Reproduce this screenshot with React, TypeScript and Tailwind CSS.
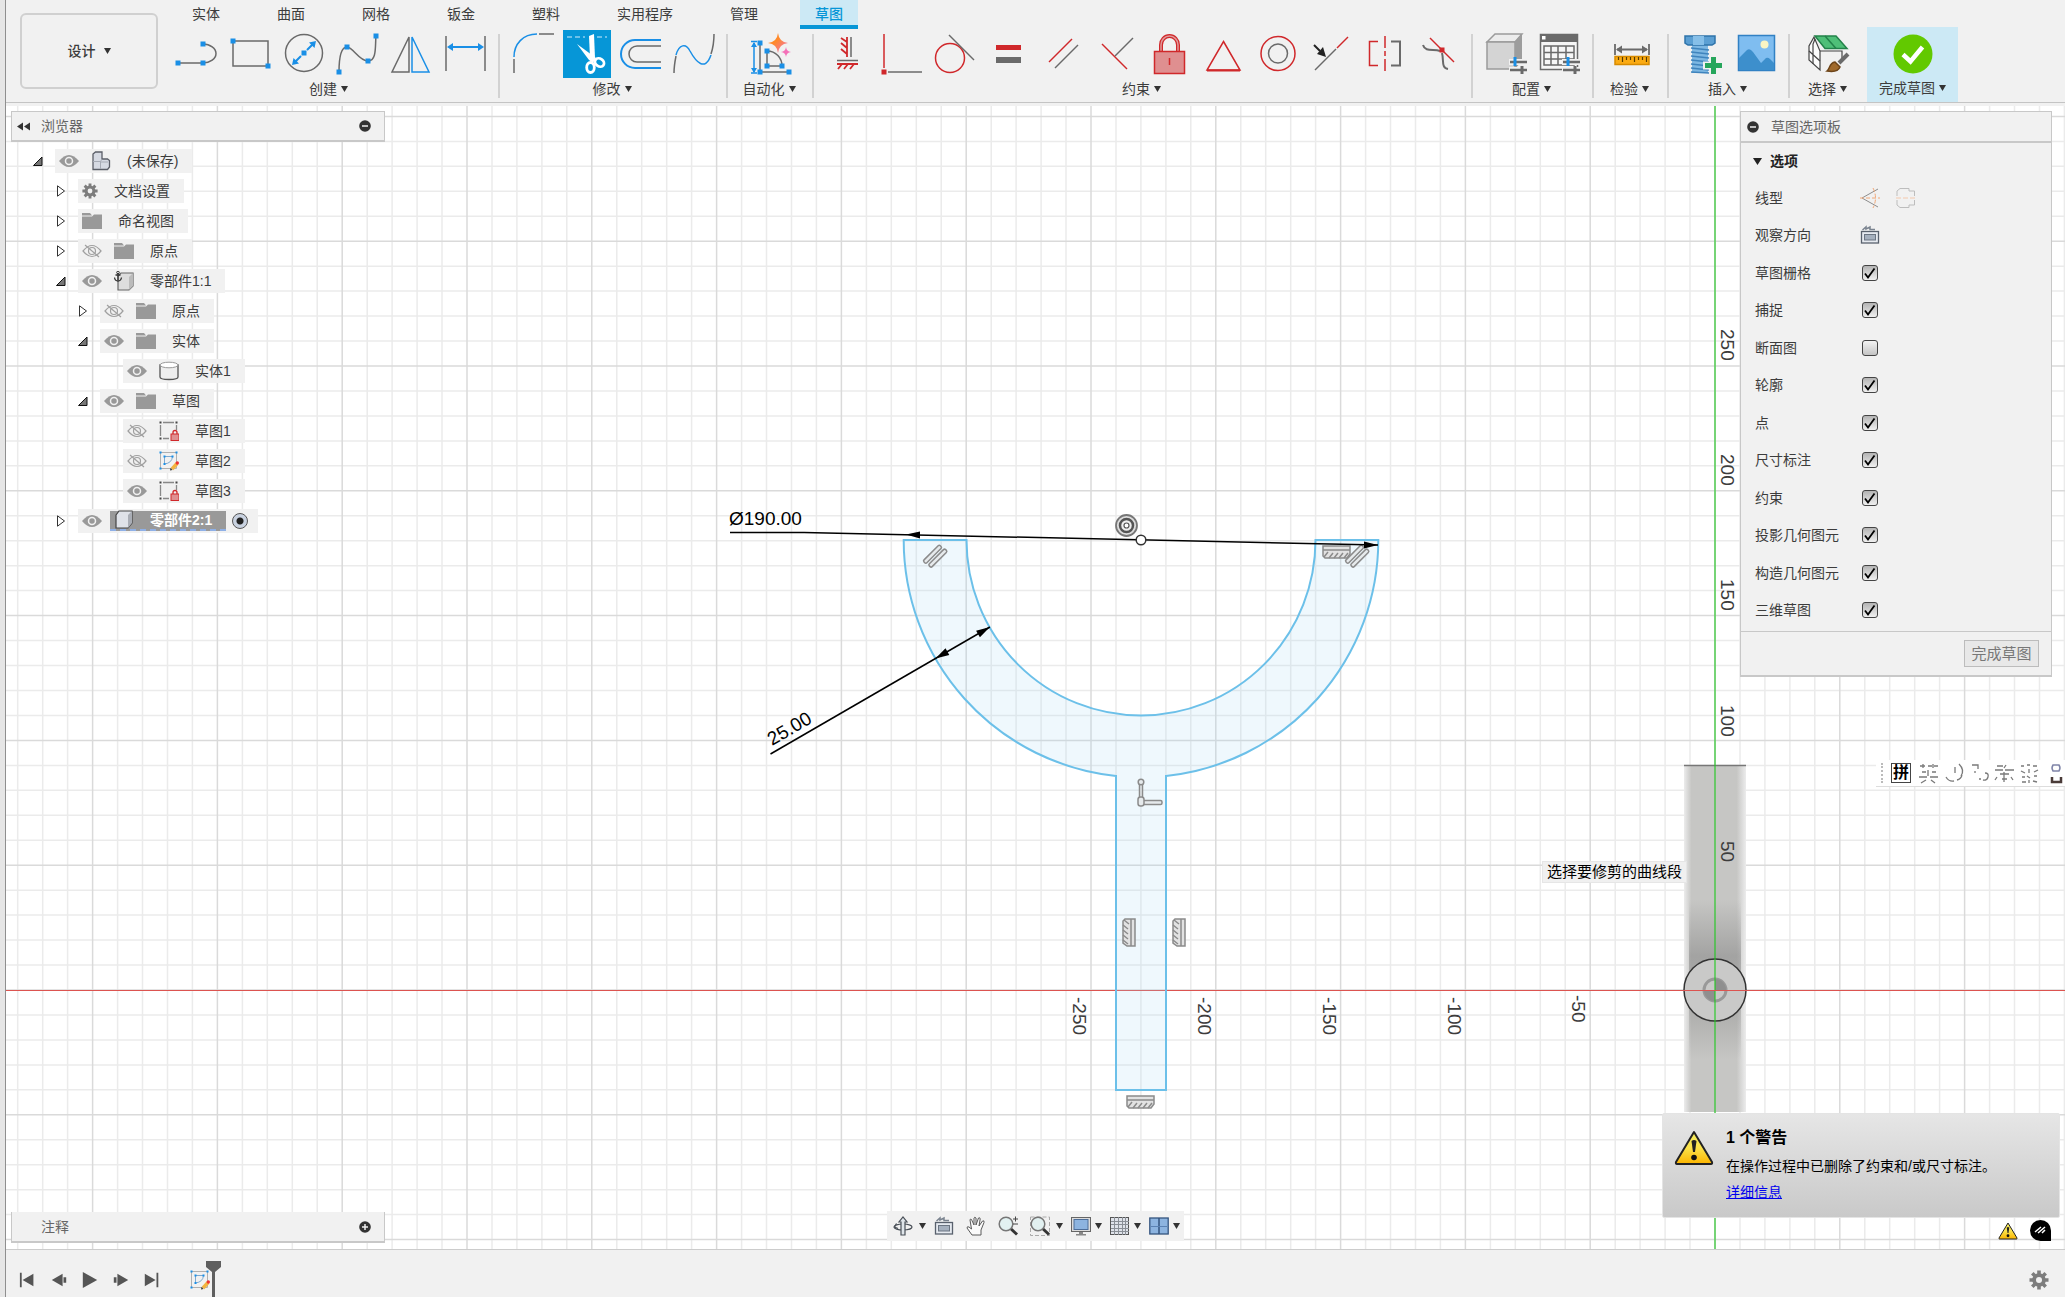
import { useState } from "react";
import type { ReactNode } from "react";

const RED = "#d0282b";
const GRAY = "#6a6a6a";
const BLUE = "#1a8fe6";

type ToolDef = { name: string; active?: boolean; icon: ReactNode };

function Dot({ x, y, c = BLUE }: { x: number; y: number; c?: string }) {
  return <rect x={x - 2.5} y={y - 2.5} width="5" height="5" fill={c} />;
}

function Caret({ className = "" }: { className?: string }) {
  return (
    <svg width="7" height="6" viewBox="0 0 7 6" className={className} aria-hidden="true">
      <path d="M0 0h7L3.5 6z" fill="#333" />
    </svg>
  );
}

const createTools: ToolDef[] = [
  {
    name: "直线",
    icon: (
      <>
        <path d="M6 33H31M31 14a13 9.5 0 0 1 0 19" stroke={GRAY} />
        <Dot x={6} y={33} /><Dot x={31} y={33} /><Dot x={31} y={14} />
      </>
    ),
  },
  {
    name: "矩形",
    icon: (
      <>
        <rect x="7" y="11" width="35" height="25" stroke={GRAY} />
        <Dot x={7} y={11} /><Dot x={42} y={36} />
      </>
    ),
  },
  {
    name: "圆",
    icon: (
      <>
        <circle cx="24" cy="23" r="18.5" stroke={GRAY} />
        <path d="M15 32L21 26M27 20L33 14" stroke={BLUE} strokeWidth="2" />
        <path d="M36 11l-7 1.500 5.500 5.500zM12 35l7-1.500-5.500-5.500z" fill={BLUE} />
        <Dot x={24} y={23} />
      </>
    ),
  },
  {
    name: "样条曲线",
    icon: (
      <>
        <path d="M6 42C6 28 8 17 14 17S26 31 35 31S42 16 43 6" stroke={GRAY} />
        <Dot x={6} y={42} /><Dot x={14} y={17} /><Dot x={35} y={31} /><Dot x={43} y={6} />
      </>
    ),
  },
  {
    name: "镜像",
    icon: (
      <>
        <path d="M22 7V42H5z" stroke={GRAY} />
        <path d="M25 7V42H42z" stroke={BLUE} />
      </>
    ),
  },
  {
    name: "草图尺寸",
    icon: (
      <>
        <path d="M5 6V41M44 6V41" stroke={GRAY} />
        <path d="M8 17H41" stroke={BLUE} strokeWidth="2" />
        <path d="M6 17l6-4v8zM43 17l-6-4v8z" fill={BLUE} />
      </>
    ),
  },
];

const modifyTools: ToolDef[] = [
  {
    name: "圆角",
    icon: (
      <>
        <path d="M4 29V43M29 4H44" stroke={GRAY} />
        <path d="M4 27C4 14 13 4 27 4" stroke={BLUE} />
      </>
    ),
  },
  {
    name: "修剪",
    active: true,
    icon: (
      <>
        <path d="M4 7H22M34 7H44" stroke="#8fd0ef" strokeWidth="1.500" strokeDasharray="5 3" />
        <path d="M26 6L31 4L32 28L27 28z" fill="#fff" />
        <path d="M14 14L33 28L30 33L26 30z" fill="#fff" />
        <ellipse cx="27.500" cy="37.500" rx="3.800" ry="5" stroke="#fff" strokeWidth="2.800" />
        <ellipse cx="36.500" cy="32.500" rx="4.800" ry="3.800" stroke="#fff" strokeWidth="2.800" transform="rotate(35 36.500 32.500)" />
      </>
    ),
  },
  {
    name: "偏移",
    icon: (
      <>
        <path d="M44 10H18a14 14 0 0 0 0 28H44" stroke={BLUE} strokeWidth="2" />
        <path d="M44 16H20a8 8 0 0 0 0 16H44" stroke={GRAY} />
      </>
    ),
  },
  {
    name: "延伸曲线",
    icon: (
      <>
        <path d="M4 43C4 36 5 31 6 26M41 24C43 18 44 12 44 4" stroke={GRAY} />
        <path d="M6 25C9 14 16 13 20 21C26 32 35 42 41 25" stroke={BLUE} />
      </>
    ),
  },
];

const autoTools: ToolDef[] = [
  {
    name: "自动约束",
    icon: (
      <>
        <defs>
          <linearGradient id="spark" x1="0" y1="0" x2="1" y2="1">
            <stop offset="0.400" stopColor="#ff8a2a" />
            <stop offset="1" stopColor="#f06fd0" />
          </linearGradient>
        </defs>
        <path d="M13 13V42H42M20 21V36H35C35 28 29 21 20 21" stroke={GRAY} />
        <path d="M4 11.500H10M4 43H10M7 13V42" stroke={BLUE} strokeWidth="1.500" />
        <path d="M7 12l-3 5h6zM7 43l-3-5h6z" fill={BLUE} />
        <Dot x={13} y={13} /><Dot x={13} y={42} /><Dot x={42} y={42} />
        <Dot x={20} y={21} /><Dot x={20} y={36} /><Dot x={35} y={36} />
        <path d="M31 3Q32 12 41 13Q32 14 31 23Q30 14 21 13Q30 12 31 3z" fill="url(#spark)" />
        <path d="M39 17Q39.500 21.500 44 22Q39.500 22.500 39 27Q38.500 22.500 34 22Q38.500 21.500 39 17z" fill="#f470b8" />
      </>
    ),
  },
];

const constraintTools: ToolDef[] = [
  {
    name: "水平/垂直",
    icon: (
      <>
        <path d="M23 7V27M17 8l6 4M17 13l6 5M17 19l6 5" stroke={RED} strokeWidth="1.800" />
        <path d="M27 7V27M13 30.500H34" stroke={GRAY} />
        <path d="M13 34H34M18 34l-4 5M24 34l-4 5M30 34l-4 5" stroke={RED} strokeWidth="1.800" />
      </>
    ),
  },
  {
    name: "重合",
    icon: (
      <>
        <path d="M6 4V38" stroke={RED} />
        <path d="M10 42H44" stroke={GRAY} />
        <Dot x={6} y={42} c={RED} />
      </>
    ),
  },
  {
    name: "相切",
    icon: (
      <>
        <circle cx="19" cy="28" r="14.500" stroke={RED} />
        <path d="M18 5L43 30" stroke={GRAY} />
      </>
    ),
  },
  {
    name: "相等",
    icon: (
      <>
        <rect x="11" y="15" width="25" height="5" fill={RED} />
        <rect x="11" y="27" width="25" height="6" fill={GRAY} />
      </>
    ),
  },
  {
    name: "平行",
    icon: (
      <>
        <path d="M10 32L33 9" stroke={RED} />
        <path d="M16 38L39 15" stroke={GRAY} />
      </>
    ),
  },
  {
    name: "垂直",
    icon: (
      <>
        <path d="M9 14L34 39" stroke={RED} />
        <path d="M22 26L40 8" stroke={GRAY} />
      </>
    ),
  },
  {
    name: "固定",
    icon: (
      <>
        <path d="M15 21V15a8.500 9 0 0 1 17 0V21" stroke={RED} strokeWidth="4" />
        <path d="M15 21V15a8.500 9 0 0 1 17 0V21" stroke="#e09a9a" strokeWidth="1.500" />
        <rect x="8.500" y="21.500" width="30" height="22" fill="#df8f90" stroke={RED} strokeWidth="1.500" />
        <path d="M23.500 28V35" stroke={RED} />
      </>
    ),
  },
  {
    name: "中点",
    icon: (
      <>
        <path d="M23.500 11.500L40 40H7z" stroke={RED} />
        <path d="M7 40.500H40" stroke={RED} strokeWidth="2" />
      </>
    ),
  },
  {
    name: "同心",
    icon: (
      <>
        <circle cx="24" cy="23.500" r="17" stroke={RED} />
        <circle cx="24" cy="23.500" r="9.500" stroke={GRAY} />
      </>
    ),
  },
  {
    name: "共线",
    icon: (
      <>
        <path d="M8 40L29 19" stroke={GRAY} />
        <path d="M30 18L41 7" stroke={RED} />
        <path d="M7 15L13 21" stroke="#222" strokeWidth="2" />
        <path d="M19 27l-9-3 6-7z" fill="#222" />
      </>
    ),
  },
  {
    name: "对称",
    icon: (
      <>
        <path d="M17 11.500H8.500V35.500H17" stroke={RED} />
        <path d="M24 6V18M24 21V26M24 29V41" stroke={RED} />
        <path d="M30 11.500H39V35.500H30" stroke={GRAY} strokeWidth="2" />
      </>
    ),
  },
  {
    name: "曲率",
    icon: (
      <>
        <path d="M8 15C10 22 18 19 25 21M27 23C29 30 26 38 33 39" stroke={GRAY} strokeWidth="2" />
        <path d="M15 8L39 32" stroke={RED} />
        <Dot x={27} y={20} c={RED} />
      </>
    ),
  },
];

// small parameter sliders shown on both configuration icons
const sliders = (
  <>
    <path d="M26 32H45M26 40H45" stroke="#f1f1f1" strokeWidth="6" />
    <path d="M27 32H44M27 40H44" stroke={GRAY} strokeWidth="2.500" />
    <path d="M32 27V36" stroke={BLUE} strokeWidth="3" />
    <path d="M39 36V44" stroke={GRAY} strokeWidth="3" />
  </>
);

const configTools: ToolDef[] = [
  {
    name: "配置模型",
    icon: (
      <>
        <path d="M4 12L12 4H39L32 12z" fill="#ececec" stroke="#9a9a9a" />
        <path d="M4 12H32V39H4z" fill="#d4d4d4" stroke="#9a9a9a" />
        <path d="M32 12L39 4V31L32 39z" fill="#9d9d9d" />
        {sliders}
      </>
    ),
  },
  {
    name: "配置表",
    icon: (
      <>
        <rect x="4.500" y="4.500" width="37" height="35" fill="#f6f6f6" stroke={GRAY} />
        <rect x="4" y="4" width="38" height="8" fill={GRAY} />
        <rect x="6" y="6" width="3.500" height="3.500" fill="#fff" />
        <path d="M8 16H38V35H8zM8 22.500H38M8 29H38M15 16V35M22 16V35M30 16V35" stroke={GRAY} />
        {sliders}
      </>
    ),
  },
];

const inspectTools: ToolDef[] = [
  {
    name: "测量",
    icon: (
      <>
        <path d="M7 14V25M41 14V25M9 19.500H39" stroke={GRAY} strokeWidth="1.800" />
        <path d="M8 19.500l6-4v8zM40 19.500l-6-4v8z" fill={GRAY} />
        <rect x="7" y="26.500" width="34" height="8" fill="#fbab13" stroke="#d78b00" />
        <path d="M10.500 27v3M14.500 27v5M18.500 27v3M22.500 27v3M26.500 27v5M30.500 27v3M34.500 27v3M38.500 27v5" stroke="#5a3c00" strokeWidth="1.200" />
      </>
    ),
  },
];

const insertTools: ToolDef[] = [
  {
    name: "插入紧固件",
    icon: (
      <>
        <rect x="13" y="15" width="16" height="28" fill="#7db7e2" />
        <path d="M12 18l18 2M12 22l18 2M12 26l18 2M12 30l18 2M12 34l18 2M12 38l18 2M12 42l18 1" stroke="#3f84bd" strokeWidth="1.300" />
        <path d="M6 6H36V13L33 15H9L6 13z" fill="#5b9fd3" stroke="#2f74aa" />
        <path d="M14 6H25V15H14z" fill="#86bfe8" />
        <path d="M34.500 25V46M24 35.500H45" stroke="#f1f1f1" strokeWidth="8" />
        <path d="M34.500 27V44M26 35.500H43" stroke="#26a65b" strokeWidth="5" />
      </>
    ),
  },
  {
    name: "插入图像",
    icon: (
      <>
        <rect x="6.500" y="5.500" width="36" height="35" fill="#7fbdf0" stroke="#3181c4" />
        <circle cx="32.500" cy="14.500" r="4" fill="#fbf6c4" />
        <path d="M7 28L15 20Q18 18 21 22L29 33L34 28Q36 27 38 29L42 33V40H7z" fill="#3d8fcc" />
      </>
    ),
  },
];

const selectTools: ToolDef[] = [
  {
    name: "选择工具",
    icon: (
      <>
        <path d="M8 7L3 16V30L14 40V21z" fill="#fbfbfb" stroke="#444" strokeWidth="1.200" />
        <path d="M14 21H36V30M3 21L14 31M9 9L7 14V34" stroke="#444" strokeWidth="1.200" />
        <path d="M9 6H30L41 18.500H19z" fill="#4fbf78" stroke="#23824a" />
        <path d="M19 6L30 18.500" stroke="#23824a" />
        <path d="M42 24L33 33" stroke="#6a6a6a" strokeWidth="4" />
        <path d="M21 41C24 39 23 33 29 32L34 37C32 42 27 42 21 41z" fill="#a06a2c" stroke="#6d451a" />
      </>
    ),
  },
];

function Tool({ tool }: { tool: ToolDef }) {
  return (
    <button
      type="button"
      aria-label={tool.name}
      aria-pressed={tool.active ?? false}
      className={tool.active ? "size-12 bg-[#0696d7]" : "size-12 hover:bg-[#e2e2e2]"}
    >
      <svg width="48" height="48" viewBox="0 0 48 48" fill="none" strokeWidth="1.500">
        {tool.icon}
      </svg>
    </button>
  );
}

function ToolGroup({ label, tools, width, first }: { label: string; tools: ToolDef[]; width: string; first?: boolean }) {
  return (
    <div className={`flex h-[72px] flex-col items-center ${width}`}>
      <div className="flex w-full justify-between">
        {first ? null : <span className="mt-1 -mr-0.5 h-16 w-0.5 shrink-0 bg-[#d2d2d2]" />}
        <div className={`flex h-12 flex-1 ${first ? "px-2" : "pr-2 pl-3"} ${tools.length === 1 ? "justify-center" : "justify-between"}`}>
          {tools.map((t) => (
            <Tool key={t.name} tool={t} />
          ))}
        </div>
      </div>
      <button type="button" className={`flex items-center gap-1 text-sm leading-5 ${first ? "mt-px pr-1" : "-mt-[19px]"}`}>
        {label}
        <Caret />
      </button>
    </div>
  );
}

const TABS = ["实体", "曲面", "网格", "钣金", "塑料", "实用程序", "管理", "草图"];

function Toolbar() {
  const [tab, setTab] = useState("草图");
  return (
    <header className="shrink-0 border-b-[3px] border-[#f1f1f1] bg-[#f1f1f1]">
      <div className="flex h-[103px] border-b border-[#c4c4c4] pl-3.5">
        <button
          type="button"
          className="mt-[13px] flex h-[76px] w-[138px] shrink-0 items-center justify-center gap-2 rounded-md border-2 border-[#d0d0d0] text-sm font-medium"
        >
          设计
          <Caret />
        </button>
        <div className="flex flex-col">
          <nav className="flex h-[29px] gap-[27px] pl-[19px]">
            {TABS.map((t) => (
              <button
                key={t}
                type="button"
                onClick={() => setTab(t)}
                className={`border-b-4 px-[15px] pt-0.5 text-sm leading-5 ${
                  t === tab ? "border-[#0696d7] bg-[#cce9f5] font-medium text-[#0696d7]" : "border-transparent"
                }`}
              >
                {t}
              </button>
            ))}
          </nav>
          <div className="mt-px flex">
            <ToolGroup first label="创建" tools={createTools} width="w-[333px] mr-px ml-1.5" />
            <ToolGroup label="修改" tools={modifyTools} width="w-[228px]" />
            <ToolGroup label="自动化" tools={autoTools} width="w-[86px]" />
            <ToolGroup label="约束" tools={constraintTools} width="w-[659px]" />
            <ToolGroup label="配置" tools={configTools} width="w-[121px]" />
            <ToolGroup label="检验" tools={inspectTools} width="w-[75px]" />
            <ToolGroup label="插入" tools={insertTools} width="w-[121px]" />
            <ToolGroup label="选择" tools={selectTools} width="w-[79px]" />
            <button type="button" className="-mt-[3px] flex h-[75px] w-[91px] flex-col items-center bg-[#cce9f5] pt-[7px]">
              <svg width="40" height="40" viewBox="0 0 40 40">
                <circle cx="20" cy="20" r="19.500" fill="#62c900" />
                <path d="M10 20.500L17.500 27.500L29.500 13" fill="none" stroke="#fff" strokeWidth="4.500" />
              </svg>
              <span className="mt-1 flex items-center gap-1 text-sm leading-5">
                完成草图
                <Caret />
              </span>
            </button>
          </div>
        </div>
      </div>
    </header>
  );
}

/* ---------- browser tree ---------- */

function Eye({ hidden }: { hidden?: boolean }) {
  return (
    <svg width="20" height="16" viewBox="0 0 20 16" fill="none">
      {hidden ? (
        <g stroke="#a0a0a0" strokeWidth="1.200">
          <path d="M1 8Q10 -3 19 8Q10 19 1 8z" />
          <circle cx="10" cy="8" r="3.500" />
          <path d="M3 2L17 14" />
        </g>
      ) : (
        <>
          <path d="M0 8Q10 -4 20 8Q10 20 0 8z" fill="#999" />
          <circle cx="10" cy="8" r="3.500" stroke="#f1f1f1" strokeWidth="1.500" />
        </>
      )}
    </svg>
  );
}

function GearIcon({ size, className = "" }: { size: number; className?: string }) {
  return (
    <svg width={size} height={size} viewBox="0 0 20 20" className={className}>
      <g stroke="#7d7d7d" strokeWidth="3.600">
        <path d="M10 0.500V19.500M0.500 10H19.500M3.300 3.300L16.700 16.700M16.700 3.300L3.300 16.700" />
      </g>
      <circle cx="10" cy="10" r="6.800" fill="#7d7d7d" />
      <circle cx="10" cy="10" r="3" fill="#f1f1f1" />
    </svg>
  );
}

function SketchIcon() {
  return (
    <svg width="20" height="20" viewBox="0 0 20 20" fill="none">
      <path d="M1.500 1.500H17.500V17.500H1.500z" stroke="#b0b0b0" />
      <path d="M5.500 5.500H13.500Q13 12 5.500 13z" stroke="#7fa9cf" />
      <path d="M0.500 0.500h2v2h-2zM16.500 0.500h2v2h-2zM0.500 16.500h2v2h-2zM4.500 4.500h2v2h-2zM12.500 4.500h2v2h-2zM4.500 12h2v2h-2z" fill={BLUE} />
      <path d="M13 18L18 12.500" stroke="#f2b441" strokeWidth="3.500" />
      <circle cx="18.300" cy="12" r="1.700" fill="#e33" />
      <path d="M11 19.500l0.500-2.500 2 2z" fill="#333" />
    </svg>
  );
}

type NodeIconName = "doc" | "gear" | "folder" | "anchor" | "body" | "locked" | "sketch" | "box";

function NodeIcon({ name }: { name: NodeIconName }) {
  if (name === "gear") return <GearIcon size={16} />;
  if (name === "sketch") return <SketchIcon />;
  return (
    <svg width="20" height="20" viewBox="0 0 20 20" fill="none">
      {name === "folder" && (
        <>
          <path d="M0 2H8L10 4.500H0z" fill="#999" />
          <path d="M0 5.500H10L12 3.500H20V18H0z" fill="#999" />
        </>
      )}
      {name === "doc" && (
        <>
          <path d="M2 3L4.500 1H11V8H16.500L18.500 9.500V16L16.500 18.500H2z" fill="#d6dae3" stroke="#5b5f68" strokeWidth="1.300" />
          <path d="M2 10.500H9.500V18M9.500 10.500L11 8M9.500 11H17" stroke="#a6abb5" />
        </>
      )}
      {name === "anchor" && (
        <>
          <path d="M4 5L7 2H19V15L15 19H4z" fill="#ddd" stroke="#666" strokeWidth="1.200" />
          <path d="M15 6L19 2V15L15 19z" fill="#bbb" />
          <path d="M4 2V9M1.500 4H6.500M0.500 6.500Q1 10 4 10T7.500 6.500" stroke="#333" strokeWidth="1.300" />
          <circle cx="4" cy="1.500" r="1.300" stroke="#333" />
        </>
      )}
      {name === "body" && (
        <>
          <path d="M1 4V16Q1 18.500 10 18.500T19 16V4z" fill="#eee" stroke="#555" strokeWidth="1.300" />
          <ellipse cx="10" cy="4" rx="9" ry="2.800" fill="#fff" stroke="#999" />
        </>
      )}
      {name === "locked" && (
        <>
          <path d="M4 1.500H15M1.500 4V15M4 17.500H10M17.500 4V9" stroke="#888" strokeWidth="1.300" />
          <path d="M0.500 0.500h2v2h-2zM16.500 0.500h2v2h-2zM0.500 16.500h2v2h-2z" fill="#444" />
          <path d="M14 13V11.500a2 2 0 0 1 4 0V13" stroke={RED} strokeWidth="1.300" />
          <rect x="12" y="13" width="8" height="6.500" fill="#df8f90" stroke={RED} />
        </>
      )}
      {name === "box" && (
        <>
          <path d="M2 5L5 1H18V13L14 18H2z" fill="#dfe2e8" stroke="#444" strokeWidth="1.200" />
          <path d="M14 5L18 1V13L14 18z" fill="#a9adb5" />
        </>
      )}
    </svg>
  );
}

type TreeNode = {
  label: string;
  level: 0 | 1 | 2 | 3;
  arrow?: "open" | "closed";
  eye?: "on" | "off";
  icon: NodeIconName;
  selected?: boolean;
};

const TREE: TreeNode[] = [
  { label: "(未保存)", level: 0, arrow: "open", eye: "on", icon: "doc" },
  { label: "文档设置", level: 1, arrow: "closed", icon: "gear" },
  { label: "命名视图", level: 1, arrow: "closed", icon: "folder" },
  { label: "原点", level: 1, arrow: "closed", eye: "off", icon: "folder" },
  { label: "零部件1:1", level: 1, arrow: "open", eye: "on", icon: "anchor" },
  { label: "原点", level: 2, arrow: "closed", eye: "off", icon: "folder" },
  { label: "实体", level: 2, arrow: "open", eye: "on", icon: "folder" },
  { label: "实体1", level: 3, eye: "on", icon: "body" },
  { label: "草图", level: 2, arrow: "open", eye: "on", icon: "folder" },
  { label: "草图1", level: 3, eye: "off", icon: "locked" },
  { label: "草图2", level: 3, eye: "off", icon: "sketch" },
  { label: "草图3", level: 3, eye: "on", icon: "locked" },
  { label: "零部件2:1", level: 1, arrow: "closed", eye: "on", icon: "box", selected: true },
];

const INDENT = ["pl-4", "pl-[39px]", "pl-[61px]", "pl-[84px]"];

function TreeRow({ node }: { node: TreeNode }) {
  return (
    <li className={`flex h-[30px] items-center ${INDENT[node.level]}`}>
      <span className="flex w-7 justify-center pr-1.5">
        {node.arrow && (
          <button type="button" aria-label={node.label} aria-expanded={node.arrow === "open"}>
            <svg width="10" height="12" viewBox="0 0 10 12">
              {node.arrow === "open" ? (
                <path d="M9 2V10.500H0.500z" fill="#777" stroke="#111" />
              ) : (
                <path d="M1.500 0.800V11.200L8.500 6z" fill="#fff" stroke="#333" />
              )}
            </svg>
          </button>
        )}
      </span>
      <span className="flex h-6 items-center bg-[#f1f1f1] px-1">
        {node.eye && (
          <button type="button" aria-label={`显示 ${node.label}`} className={node.selected ? "mr-2" : "mr-3"}>
            <Eye hidden={node.eye === "off"} />
          </button>
        )}
        {node.selected ? (
          <>
            <span className="flex h-5 items-center gap-4 border-b-2 border-dashed border-[#8fb0e6] bg-[#999] pr-3.5 pl-1 text-sm leading-4 font-bold text-white">
              <NodeIcon name={node.icon} />
              {node.label}
            </span>
            <input
              type="radio"
              name="active-component"
              aria-label={`激活 ${node.label}`}
              defaultChecked
              className="mx-1.5 size-4 appearance-none rounded-full border border-[#555] bg-[radial-gradient(circle,#222_3px,#c9d2e0_4px)]"
            />
          </>
        ) : (
          <span className="flex items-center gap-4 pr-2.5 text-sm leading-5">
            <NodeIcon name={node.icon} />
            {node.label}
          </span>
        )}
      </span>
    </li>
  );
}

function CircleButton({ label, plus }: { label: string; plus?: boolean }) {
  return (
    <button type="button" aria-label={label}>
      <svg width="12" height="12" viewBox="0 0 12 12">
        <circle cx="6" cy="6" r="5.800" fill="#333" />
        <path d={plus ? "M3 6H9M6 3V9" : "M3 6H9"} stroke="#f1f1f1" strokeWidth="1.500" />
      </svg>
    </button>
  );
}

/* ---------- sketch palette ---------- */

const OPTIONS: [string, boolean][] = [
  ["草图栅格", true],
  ["捕捉", true],
  ["断面图", false],
  ["轮廓", true],
  ["点", true],
  ["尺寸标注", true],
  ["约束", true],
  ["投影几何图元", true],
  ["构造几何图元", true],
  ["三维草图", true],
];

function CameraIcon() {
  return (
    <svg width="20" height="20" viewBox="0 0 20 20" fill="none">
      <path d="M2.500 5L6 2V4L10 2V4.500H15" stroke="#7b8490" strokeWidth="1.500" />
      <rect x="1.500" y="6.500" width="17" height="11.500" fill="#e6eaf0" stroke="#59616d" strokeWidth="1.300" />
      <rect x="4.500" y="9.500" width="11" height="5.500" fill="#a5b0be" stroke="#6b7582" />
    </svg>
  );
}

function Palette() {
  return (
    <section className="mr-[13px] w-[312px] border border-b-2 border-[#c8c8c8] bg-[#f1f1f1]">
      <div className="flex h-[31px] items-center gap-3 border-b-2 border-[#c8c8c8] pl-1.5 text-sm text-[#666]">
        <CircleButton label="折叠" />
        草图选项板
      </div>
      <h2 className="flex h-9 items-center gap-2 pl-3 text-sm font-bold text-[#222]">
        <svg width="9" height="7" viewBox="0 0 9 7">
          <path d="M0 0h9L4.500 7z" fill="#222" />
        </svg>
        选项
      </h2>
      <div className="grid h-[452px] auto-rows-fr pb-0.5 text-sm">
        <div className="flex items-center pl-3.5">
          <span className="w-[105px]">线型</span>
          <button type="button" aria-label="构造">
            <svg width="20" height="20" viewBox="0 0 20 20" fill="none">
              <path d="M18 1L2 10L18 19" stroke="#8d8d8d" />
              <path d="M0 10H20M13 0Q18 10 13 20" stroke="#f0a878" strokeDasharray="4 2" />
            </svg>
          </button>
          <button type="button" aria-label="中心线" className="ml-4">
            <svg width="20" height="20" viewBox="0 0 20 20" fill="none">
              <path d="M1 8V3L4 0.500H13V3H18.500V8M1 12V17L4 19.500H13V17H18.500V12" stroke="#bdbdbd" />
              <path d="M0 10H20" stroke="#f4c9ad" strokeDasharray="5 2" />
            </svg>
          </button>
        </div>
        <div className="flex items-center pl-3.5">
          <span className="w-[105px]">观察方向</span>
          <button type="button" aria-label="观察方向"><CameraIcon /></button>
        </div>
        {OPTIONS.map(([name, on]) => (
          <label key={name} className="flex items-center pl-3.5">
            <span className="w-[107px]">{name}</span>
            <span className="grid">
              <input
                type="checkbox"
                defaultChecked={on}
                className="peer col-start-1 row-start-1 size-4 appearance-none rounded-[3px] border border-[#444] bg-linear-to-b from-[#f4f4f4] to-[#c4c4c4] checked:from-[#b4b4b4] checked:to-[#f0f0f0]"
              />
              <svg viewBox="0 0 16 16" className="pointer-events-none invisible col-start-1 row-start-1 size-4 peer-checked:visible">
                <path d="M3 8.500L6 12.500L12.500 3.500" fill="none" stroke="#000" strokeWidth="1.800" />
              </svg>
            </span>
          </label>
        ))}
      </div>
      <div className="flex h-11 items-center justify-end border-t border-[#c8c8c8] pr-3">
        <button type="button" className="h-[27px] w-[75px] border border-[#bcbcbc] bg-[#e8e8e8] text-[15px] leading-5 text-[#777]">
          完成草图
        </button>
      </div>
    </section>
  );
}

/* ---------- canvas ---------- */

const OX = 1715;
const OY = 990;
const STEP = 24.96;

function Grid() {
  const minor: string[] = [];
  const major: string[] = [];
  for (let i = -14; i <= 69; i++) {
    (i % 5 === 0 ? major : minor).push(`M${(OX - i * STEP).toFixed(1)} 100V1260`);
  }
  for (let i = -11; i <= 36; i++) {
    (i % 5 === 0 ? major : minor).push(`M0 ${(OY - i * STEP).toFixed(1)}H2070`);
  }
  return (
    <>
      <path d={minor.join("")} stroke="#ebebeb" strokeWidth="1.500" />
      <path d={major.join("")} stroke="#dadada" strokeWidth="1.500" />
    </>
  );
}

function ParallelMark({ x, y }: { x: number; y: number }) {
  return (
    <g transform={`translate(${x} ${y}) rotate(-45)`} fill="#e6eaec" stroke="#8b8b8b" strokeWidth="1.500">
      <rect x="-12" y="-5" width="23" height="4" rx="1.500" />
      <rect x="-11" y="1.500" width="23" height="4" rx="1.500" />
    </g>
  );
}

function HatchMark({ x, y, turn = 0 }: { x: number; y: number; turn?: number }) {
  return (
    <g transform={`translate(${x} ${y}) rotate(${turn})`} stroke="#8b8b8b" strokeWidth="1.500">
      <path d="M-14 -6H13V2L10 6H-12L-14 4z" fill="#e2e2e2" />
      <path d="M-14 -2H13M-13 5l4-5M-8 6l4-5M-3 6l4-5M2 6l4-5M7 6l4-5" />
    </g>
  );
}

function AxisLabel({ x, y, children }: { x: number; y: number; children: string }) {
  return (
    <text transform={`translate(${x} ${y}) rotate(90)`} fontSize="19" fill="#3c3c3c">
      {children}
    </text>
  );
}

function SketchCanvas() {
  return (
    <svg
      className="absolute inset-0 size-full"
      viewBox="6 106 2059 1143"
      preserveAspectRatio="xMaxYMin slice"
      fill="none"
    >
      <defs>
        <linearGradient id="rod" x1="0" x2="1" y1="0" y2="0">
          <stop offset="0" stopColor="#ececec" />
          <stop offset="0.120" stopColor="#c6c6c4" />
          <stop offset="0.850" stopColor="#c6c6c4" />
          <stop offset="1" stopColor="#ececec" />
        </linearGradient>
        <linearGradient id="shade" x1="0" x2="0" y1="0" y2="1">
          <stop offset="0" stopColor="#808080" stopOpacity="0" />
          <stop offset="0.350" stopColor="#808080" stopOpacity="0.500" />
          <stop offset="0.650" stopColor="#808080" stopOpacity="0.400" />
          <stop offset="1" stopColor="#808080" stopOpacity="0" />
        </linearGradient>
      </defs>
      <Grid />

      <rect x="1684" y="765" width="62" height="347" fill="url(#rod)" />
      <rect x="1689" y="900" width="52" height="160" fill="url(#shade)" />
      <path d="M1684 765.500H1746" stroke="#777" strokeWidth="1.500" />
      <circle cx={OX} cy={OY} r="31" fill="#c9c9c8" stroke="#333" strokeWidth="1.500" />
      <circle cx={OX} cy={OY} r="11" fill="#c9c9c8" stroke="#999" strokeWidth="3" />
      <path d="M1715 990V979A11 11 0 0 1 1726 990zM1715 990V1001A11 11 0 0 1 1704 990z" fill="#8f8f8f" />

      <path d="M1715 100V1260" stroke="#1ec81e" strokeOpacity="0.550" strokeWidth="2" />
      <path d="M0 990.500H2070" stroke="#dc5450" />

      <g>
        <AxisLabel x={1721} y={329}>250</AxisLabel>
        <AxisLabel x={1721} y={454}>200</AxisLabel>
        <AxisLabel x={1721} y={579}>150</AxisLabel>
        <AxisLabel x={1721} y={705}>100</AxisLabel>
        <AxisLabel x={1721} y={841}>50</AxisLabel>
        <AxisLabel x={1073} y={997}>-250</AxisLabel>
        <AxisLabel x={1198} y={997}>-200</AxisLabel>
        <AxisLabel x={1323} y={997}>-150</AxisLabel>
        <AxisLabel x={1448} y={997}>-100</AxisLabel>
        <AxisLabel x={1572} y={995}>-50</AxisLabel>
      </g>

      <path
        d="M903.700 540H966.500A174.500 175.500 0 0 0 1315.500 540H1378.300A237.300 237.300 0 0 1 1166 776V1090H1116V776A237.300 237.300 0 0 1 903.700 540z"
        fill="#a8d8f5"
        fillOpacity="0.180"
        stroke="#6cc0e9"
        strokeWidth="2"
      />

      <ParallelMark x={935} y={556} />
      <ParallelMark x={1357} y={556} />
      <HatchMark x={1337} y={552} />
      <HatchMark x={1129} y={933} turn={90} />
      <HatchMark x={1179} y={933} turn={90} />
      <HatchMark x={1141} y={1102} />
      <g fill="#e6eaec" stroke="#8b8b8b" strokeWidth="1.500">
        <rect x="1139.500" y="783" width="3" height="16" />
        <rect x="1143" y="800.500" width="19" height="4" rx="1.500" />
        <circle cx="1141" cy="782" r="2.800" />
        <rect x="1138" y="797" width="6" height="9" rx="2.500" />
      </g>

      {/* dimensions */}
      <g stroke="#000" strokeWidth="1.500">
        <path d="M730 532.500H804L1378 545" />
        <path d="M770.500 754L989.900 627" />
      </g>
      <path
        d="M906 534.600L920 531.500V538.500zM1378 545L1364 541.500V548.500zM935.500 658.600L945.500 648.300L949.300 654.900zM989.900 627L979.900 637.300L976.100 630.700z"
        fill="#000"
      />
      <text x="729" y="525" fontSize="19" fill="#000">Ø190.00</text>
      <text transform="translate(772 746) rotate(-30)" fontSize="19" fill="#000">25.00</text>

      <circle cx="1126.500" cy="525.500" r="10.500" fill="#ddd" stroke="#777" strokeWidth="1.800" />
      <circle cx="1126.500" cy="525.500" r="6.500" fill="#eee" stroke="#555" strokeWidth="2.500" />
      <circle cx="1126.500" cy="525.500" r="2.500" fill="#fff" stroke="#555" strokeWidth="1.200" />
      <circle cx="1141" cy="540" r="4.800" fill="#fff" stroke="#333" strokeWidth="1.500" />
    </svg>
  );
}

/* ---------- overlays ---------- */

function NavBar() {
  return (
    <div className="mb-2 flex h-[30px] items-center bg-[#f1f1f1] pr-1 pl-1.5">
      <button type="button" aria-label="动态观察" className="mr-2 flex items-center gap-1.5">
        <svg width="20" height="20" viewBox="0 0 20 20" fill="none" stroke="#4a5058" strokeWidth="1.200">
          <ellipse cx="10" cy="11" rx="9" ry="3" />
          <path d="M8 19V6H6L10 1L14 6H12V19z" fill="#dfe5ea" />
          <path d="M3.500 7.500L1.500 11L5 12.500" />
        </svg>
        <Caret />
      </button>
      <button type="button" aria-label="观察方向" className="mr-3"><CameraIcon /></button>
      <button type="button" aria-label="平移" className="mr-3">
        <svg width="20" height="20" viewBox="0 0 20 20" fill="#fafafa" stroke="#5a5a5a">
          <path d="M6 19L1 12Q1 10 3 11L5.500 13L4 4Q4 2.500 5.500 3.500L8 9V2Q8.500 0.500 10 2V9L12.500 2Q14 1 14.200 3L13 10L16.500 5Q18.500 4 18 6.500L15 14V19z" />
        </svg>
      </button>
      <button type="button" aria-label="缩放" className="mr-3">
        <svg width="20" height="20" viewBox="0 0 20 20" fill="none">
          <path d="M12 12L19 18.500" stroke="#333" strokeWidth="3" />
          <circle cx="8" cy="8" r="6.800" fill="#e2f1f1" stroke="#777" strokeWidth="1.500" />
          <path d="M15 3H20M17.500 0.500V5.500M15 8H20" stroke="#444" />
        </svg>
      </button>
      <button type="button" aria-label="窗口缩放" className="mr-2 flex items-center gap-1.5">
        <svg width="20" height="20" viewBox="0 0 20 20" fill="none">
          <rect x="0.500" y="1" width="19" height="18.500" stroke="#aaa" strokeDasharray="4 2" />
          <path d="M12 12L19 18.500" stroke="#333" strokeWidth="3" />
          <circle cx="8" cy="8" r="6.800" fill="#e2f1f1" stroke="#777" strokeWidth="1.500" />
        </svg>
        <Caret />
      </button>
      <button type="button" aria-label="显示设置" className="mr-2 flex items-center gap-1">
        <svg width="20" height="20" viewBox="0 0 20 20">
          <rect x="0.500" y="1.500" width="19" height="14" fill="#dcdcdc" stroke="#666" />
          <rect x="3" y="3.500" width="14" height="10" fill="#8db4e0" stroke="#4d6e9a" />
          <path d="M8 16H12V18H15V19.500H5V18H8z" fill="#888" />
        </svg>
        <Caret />
      </button>
      <button type="button" aria-label="栅格和捕捉" className="mr-2 flex items-center gap-1">
        <svg width="20" height="20" viewBox="0 0 20 20">
          <rect x="0.500" y="1.500" width="18" height="17" fill="#dfe3ea" stroke="#555" />
          <path d="M4.500 1V19M8.500 1V19M12.500 1V19M15.500 1V19M1 5.500H19M1 8.500H19M1 12.500H19M1 15.500H19" stroke="#8a8f96" />
        </svg>
        <Caret />
      </button>
      <button type="button" aria-label="视口" className="flex items-center gap-1">
        <svg width="20" height="20" viewBox="0 0 20 20">
          <rect x="0.800" y="2" width="18.400" height="16" fill="#8db4e0" stroke="#35557f" strokeWidth="1.300" />
          <path d="M10 2V18" stroke="#35557f" strokeWidth="1.500" />
          <path d="M2 10.500H18" stroke="#5b82b4" />
        </svg>
        <Caret />
      </button>
    </div>
  );
}

function WarningIcon({ className }: { className: string }) {
  return (
    <svg viewBox="0 0 40 36" className={className}>
      <defs>
        <linearGradient id="warn" x1="0" x2="0" y1="0" y2="1">
          <stop offset="0" stopColor="#f4ec60" />
          <stop offset="0.500" stopColor="#fbe24a" />
          <stop offset="1" stopColor="#fbb400" />
        </linearGradient>
      </defs>
      <path d="M20 2L38 32Q38.500 34 37 34H3Q1.500 34 2 32z" fill="url(#warn)" stroke="#222" strokeWidth="2" strokeLinejoin="round" />
      <path d="M17.500 11Q20 9 22.500 11L21 22H19z" fill="#222" />
      <circle cx="20" cy="27.500" r="2.800" fill="#111" />
    </svg>
  );
}

function Warning() {
  return (
    <div className="mr-[5px] flex h-[105px] w-[398px] gap-3 rounded-xs border border-[#e4e4e4] bg-linear-to-b from-[#e6e6e6] to-[#c9c9c9] pt-3 pl-[11px] text-black">
      <WarningIcon className="mt-1 h-9 w-10 shrink-0" />
      <div>
        <h2 className="text-base leading-6 font-bold">1 个警告</h2>
        <p className="mt-1 text-sm leading-6">在操作过程中已删除了约束和/或尺寸标注。</p>
        <a href="#details" className="mt-1 block text-sm leading-5 text-[#0000ee] underline">详细信息</a>
      </div>
    </div>
  );
}

function ImeBar() {
  return (
    <div className="absolute top-[654px] right-0 flex h-[27px] w-[189px] items-center border-b border-[#ddd] bg-white pl-[5px]">
      <span className="mr-2 h-5 border-l-2 border-dotted border-[#bbb]" />
      <span className="flex size-5 shrink-0 items-center justify-center border border-[#444] text-base leading-4 font-bold text-black">拼</span>
      <svg width="154" height="26" viewBox="0 0 154 26" fill="none" stroke="#7a7a7a" strokeWidth="1.300" className="shrink-0">
        <path d="M9 6h5M17 6h4M23 6h4M12 4v4M22 4v4M11 12h4M17 10v6M21 12h4M8 17h8M19 17h8M15 20l-5 3M20 20l4 3" />
        <path d="M48 4q6 6 2 12M44 7v6M35 17q3 5 8 4M46 20q4-1 5-5" />
        <path d="M61 5h6v4M64 11v2M74 13q4 0 3 4t-5 3M68 19h2" />
        <path d="M86 6h6M95 5l-2 3M84 10h8M94 10h9M89 14h9M93 12v10M86 17l-2 3M100 17l2 3M91 19h5" />
        <path d="M110 6h3M116 5h3M122 6h4M110 11l4 2M118 9v4M123 12l4-2M111 17h3M116 16l3 2M123 16h3M111 22h4M118 20v3M122 21l4 1" />
        <path d="M142 5h6q2 3 0 6h-6q-2-3 0-6z" stroke="#7f84a8" strokeWidth="1.500" />
        <path d="M141 17v5h9v-5" stroke="#4a3b38" strokeWidth="2.500" />
      </svg>
    </div>
  );
}

function Timeline() {
  return (
    <footer className="flex h-12 shrink-0 items-center border-t border-[#ccc] bg-[#f1f1f1] pt-[13px] pr-4 pl-3">
      <div className="flex gap-[11px]">
        {[
          ["开头", "M0 2h2v16H0zM15 3v14L3 10z"],
          ["上一步", "M13 3v14L1 10zM14 7h3v6h-3z"],
          ["播放", "M1 1l16 9L1 19z"],
          ["下一步", "M5 3v14l12-7zM1 7h3v6H1z"],
          ["结尾", "M1 3v14l12-7zM14 2h2v16h-2z"],
        ].map(([name, d]) => (
          <button key={name} type="button" aria-label={name}>
            <svg width="20" height="18" viewBox="-1 0 20 20">
              <path d={d} fill="#555" />
            </svg>
          </button>
        ))}
      </div>
      <button type="button" aria-label="草图" className="ml-7"><SketchIcon /></button>
      <svg width="15" height="36" viewBox="0 0 15 36" className="-ml-1 self-end">
        <path d="M0 0H15V6L9 11V36H6V11L0 6z" fill="#5f5f5f" />
      </svg>
      <button type="button" aria-label="首选项" className="ml-auto"><GearIcon size={20} /></button>
    </footer>
  );
}

export default function App() {
  return (
    <div className="flex h-screen w-full overflow-hidden bg-white font-['Liberation_Sans','Noto_Sans_CJK_SC',sans-serif] text-[#3c3c3c]">
      <div className="w-1.5 shrink-0 border-r border-[#8f8f8f] bg-[#e6e6e6]" />
      <div className="flex min-w-0 flex-1 flex-col">
        <Toolbar />
        <main className="relative min-h-0 flex-1 overflow-hidden">
          <SketchCanvas />
          <div className="relative grid h-full grid-cols-[1fr_auto_1fr] pt-[5px]">
            <div className="flex flex-col justify-between pb-1.5 pl-[5px]">
              <div>
                <div className="flex h-[31px] w-[374px] items-center border border-b-2 border-[#c8c8c8] bg-[#f1f1f1] pr-[13px] pl-[5px] text-sm text-[#666]">
                  <button type="button" aria-label="折叠浏览器" className="mr-[11px]">
                    <svg width="13" height="9" viewBox="0 0 13 9">
                      <path d="M6 0.500v8L0 4.500zM13 0.500v8L7 4.500z" fill="#333" />
                    </svg>
                  </button>
                  浏览器
                  <span className="ml-auto flex"><CircleButton label="折叠" /></span>
                </div>
                <ul className="mt-1">
                  {TREE.map((node, i) => (
                    <TreeRow key={i} node={node} />
                  ))}
                </ul>
              </div>
              <div className="flex h-[31px] w-[374px] items-center border-x border-b-2 border-[#c8c8c8] bg-[#f1f1f1] pr-[13px] pl-[29px] text-sm text-[#666]">
                注释
                <span className="ml-auto flex"><CircleButton label="展开注释" plus /></span>
              </div>
            </div>
            <div className="flex items-end">
              <NavBar />
            </div>
            <div className="flex flex-col items-end justify-between">
              <Palette />
              <div className="flex flex-col items-end">
                <Warning />
                <div className="mt-0.5 mr-3.5 mb-2 flex items-center gap-3">
                  <WarningIcon className="h-[18px] w-5" />
                  <svg width="21" height="21" viewBox="0 0 21 21">
                    <path d="M10.500 0A10.500 10.500 0 0 1 21 10.500V21H10.500A10.500 10.500 0 0 1 10.500 0z" fill="#000" />
                    <path d="M5 12L11 7M8 13L15 7M12 13L15 10" stroke="#fff" strokeWidth="1.500" />
                  </svg>
                </div>
              </div>
            </div>
          </div>
          <ImeBar />
          <div className="absolute top-[755px] right-[378px] border border-[#e6e6e6] bg-[#f0f0f0] px-1 text-[15px] leading-5 text-black">
            选择要修剪的曲线段
          </div>
        </main>
        <Timeline />
      </div>
    </div>
  );
}
